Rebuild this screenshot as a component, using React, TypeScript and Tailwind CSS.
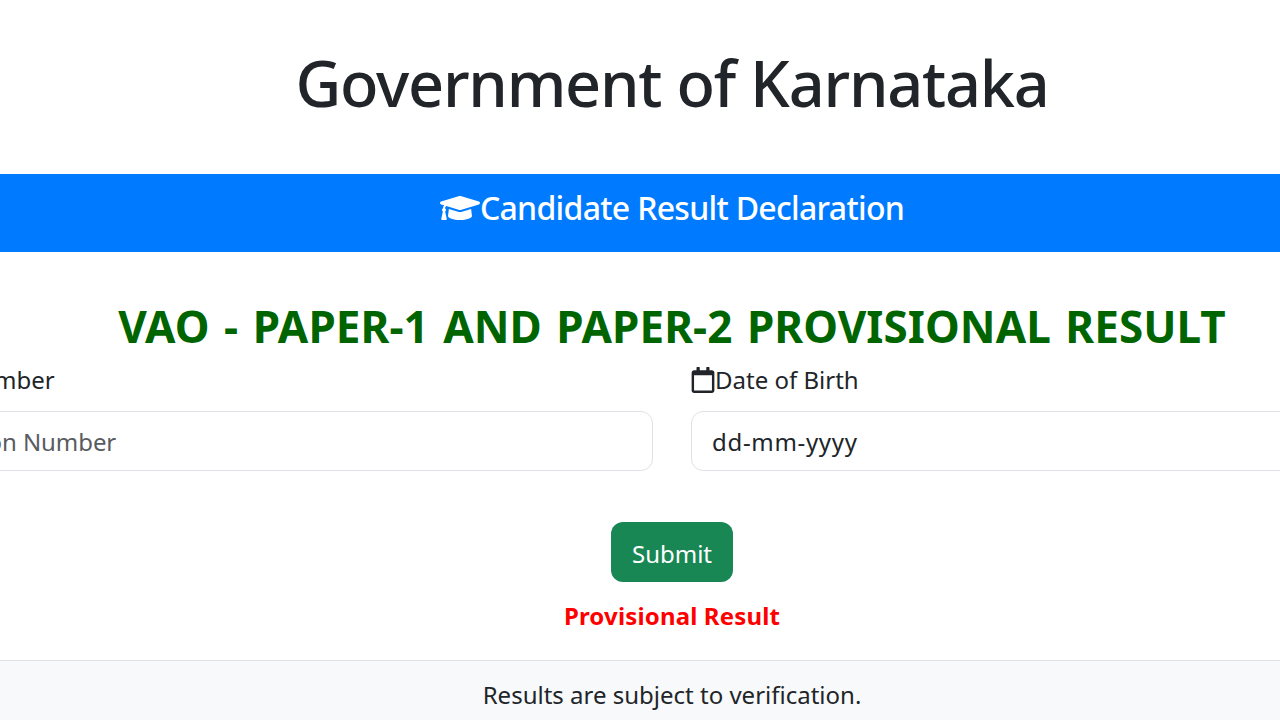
import React from "react";
import { FaGraduationCap, FaRegCalendar, FaRegIdCard } from "react-icons/fa";

function Field({ icon, label, placeholder, dark }: { icon: React.ReactNode; label: string; placeholder: string; dark?: boolean }) {
  return (
    <div>
      <label className="flex items-center h-[36px] text-[24px] whitespace-nowrap">
        {icon}
        {label}
      </label>
      <input
        readOnly
        placeholder={placeholder}
        className={
          dark
            ? "mt-[13px] block h-[60px] w-full rounded-[12px] border border-[#dee2e6] bg-white px-[20px] text-[24px] tracking-[0.68px] outline-none placeholder:text-[#212529]"
            : "mt-[13px] block h-[60px] w-full rounded-[12px] border border-[#dee2e6] bg-white px-[20px] text-[24px] tracking-[-0.08px] outline-none placeholder:text-[#595c5f]"
        }
      />
    </div>
  );
}

export default function App() {
  return (
    <div className="w-[1280px] h-[720px] overflow-hidden bg-white">
      <div className="w-[1344px] text-center text-[#212529] font-['Noto_Sans','Open_Sans',sans-serif]">
        <div className="h-[174px] pt-[41px]">
          <h1 className="text-[63px] leading-[84px] font-medium tracking-[-1.22px] whitespace-nowrap">Government of Karnataka</h1>
        </div>
        <div className="h-[78px] pb-[10px] bg-[#007bff] text-white flex items-center justify-center">
          <FaGraduationCap className="w-[40px] h-[32px]" />
          <span className="text-[32px] font-medium leading-[48px] tracking-[-0.7px]">Candidate Result Declaration</span>
        </div>
        <h2 className="pt-[45px] text-[44px] leading-[58px] font-bold tracking-[0.06px] [word-spacing:3px] text-[#006400] whitespace-nowrap">VAO - PAPER-1 AND PAPER-2 PROVISIONAL RESULT</h2>
        <div className="ml-[-206px] w-[1756px] grid grid-cols-2 gap-[38px] pt-[7px] text-left">
          <Field icon={<FaRegIdCard className="w-[24px] h-[26px]" />} label="Registration Number" placeholder="Enter Registration Number" />
          <Field icon={<FaRegCalendar className="w-[24px] h-[26px]" />} label="Date of Birth" placeholder="dd-mm-yyyy" dark />
        </div>
        <div className="pt-[51px]">
          <button className="h-[60px] w-[122px] rounded-[12px] bg-[#198754] pt-[4px] text-white text-[24px]">Submit</button>
        </div>
        <div className="pt-[16px] text-[24px] leading-[36px] font-bold tracking-[0.15px] text-[#ff0000]">Provisional Result</div>
        <div className="mt-[26px] h-[70px] bg-[#f8f9fa] border-t border-[#dee2e6] pt-[16px] text-[24px] leading-[36px]">
          Results are subject to verification.
        </div>
      </div>
    </div>
  );
}
